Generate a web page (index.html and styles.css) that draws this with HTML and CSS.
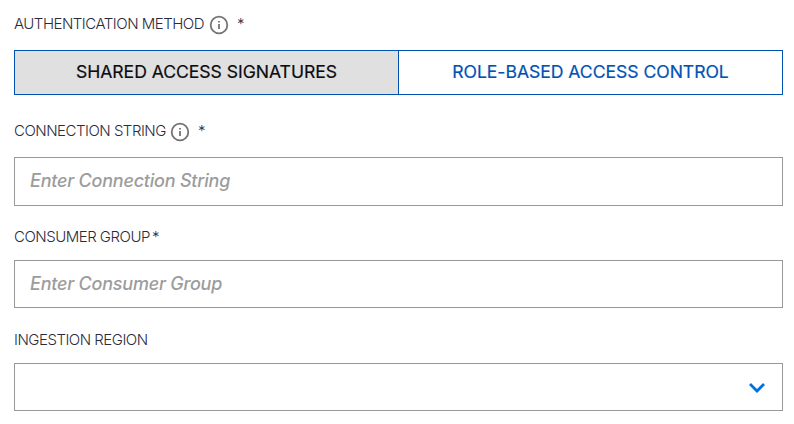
FILE: index.html
```html
<!DOCTYPE html>
<html lang="en">
<head>
<meta charset="utf-8">
<title>Ingestion settings</title>
<link rel="stylesheet" href="styles.css">
</head>
<body>
<form class="form">
  <div class="label label-auth"><span class="name">AUTHENTICATION METHOD</span><svg class="info" viewBox="0 0 20 20"><circle cx="10" cy="10" r="8.3"/><path d="M10 9v5M10 6v1.6"/></svg><span class="star">*</span></div>
  <div class="toggle">
    <button type="button" class="option selected"><span class="sas">SHARED ACCESS SIGNATURES</span></button>
    <button type="button" class="option"><span class="rbac">ROLE-BASED ACCESS CONTROL</span></button>
  </div>
  <div class="label label-conn"><span class="name">CONNECTION STRING</span><svg class="info" viewBox="0 0 20 20"><circle cx="10" cy="10" r="8.3"/><path d="M10 9v5M10 6v1.6"/></svg><span class="star">*</span></div>
  <div class="field field-conn"><span class="hint hint-conn">Enter Connection String</span></div>
  <div class="label label-group"><span class="name">CONSUMER GROUP</span><span class="star tight">*</span></div>
  <div class="field"><span class="hint hint-group">Enter Consumer Group</span></div>
  <div class="label label-region"><span class="name">INGESTION REGION</span></div>
  <div class="field select"><svg class="chevron" viewBox="0 0 18 12"><path d="M2 2l7 7 7-7"/></svg></div>
</form>
</body>
</html>
```
FILE: styles.css
```css
* { box-sizing: border-box; }
body { margin: 0; background: #fff; font-family: Inter, "Liberation Sans", sans-serif; color: #2b2b3a; }
.form { padding: 14px 11px 0 14px; }
.label { display: flex; align-items: center; height: 20px; font-size: 15px; font-weight: 300; line-height: 20px; letter-spacing: -0.5px; white-space: nowrap; }
.info { width: 20px; height: 20px; margin: 2px 0 0 5px; fill: none; stroke: #747474; stroke-width: 1.8; }
.star { margin-left: 8px; }
.label-conn .info { margin-left: 4px; }
.tight { margin-left: 2px; }
.toggle { display: flex; height: 45px; margin-top: 16px; border: 1px solid #0052b3; }
.option { flex: 1; padding: 0 0 1px; border: 0; background: #fff; color: #0052b3; font: 400 17.6px/42px Inter, sans-serif; letter-spacing: -0.04px; -webkit-text-stroke: 0.2px currentColor; white-space: nowrap; }
.selected { background: #e0e0e0; color: #0c0c0f; border-right: 1px solid #0052b3; }
.label-conn { margin-top: 26px; }
.field { display: flex; align-items: center; height: 48px; margin-top: 13px; padding: 0 15px 1px; border: 1px solid #999; }
.field-conn { height: 49px; margin-top: 16px; padding-bottom: 2px; }
.hint { font-size: 18px; font-style: italic; font-weight: 500; color: #9c9c9c; letter-spacing: -0.22px; }
.label-group { margin-top: 21px; }
.label-region { margin-top: 22px; }
.select { justify-content: flex-end; padding: 2px 16px 0; }
.chevron { width: 18px; height: 12px; fill: none; stroke: #0070e0; stroke-width: 2.8; }
```
